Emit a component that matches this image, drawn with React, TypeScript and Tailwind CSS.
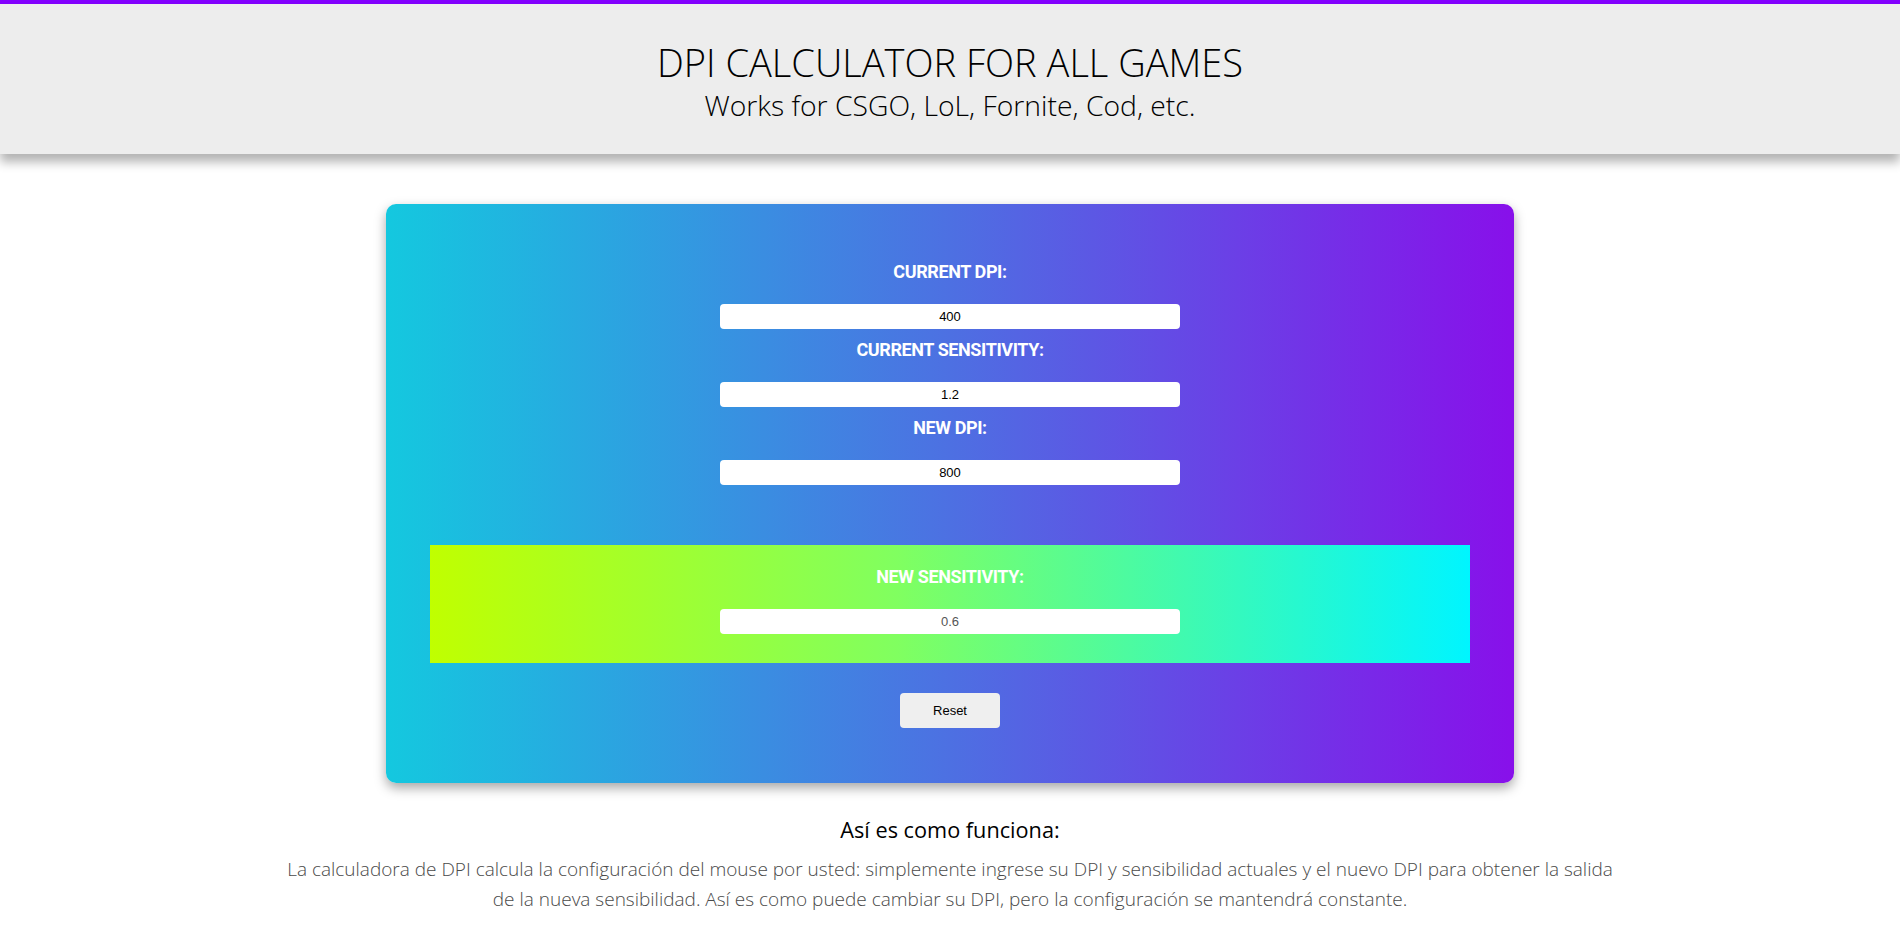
import React, { useState } from "react";

function Field({ label, value, gray, first }: { label: string; value: string; gray?: boolean; first?: boolean }) {
  return (
    <div className={`flex flex-col items-center ${first ? "" : "mt-[11px]"}`}>
      <div
        className="text-white font-bold text-[18px] leading-[20px] tracking-[-0.4px] mb-[22px]"
        style={{ fontFamily: "Roboto, 'Noto Sans', sans-serif" }}
      >
        {label}
      </div>
      <input
        readOnly
        value={value}
        className={`w-[460px] h-[25px] bg-white rounded-[4px] text-center text-[13px] outline-none border-0 ${gray ? "text-[#555]" : "text-black"}`}
        style={{ fontFamily: "'Liberation Sans', Arial, sans-serif" }}
      />
    </div>
  );
}

export default function App() {
  const [, setR] = useState(0);
  return (
    <div className="min-h-[938px] bg-white" style={{ fontFamily: "'Open Sans', sans-serif" }}>
      <div className="h-[4px] bg-[#8400ff]" />
      <header className="h-[150px] bg-[#ededed] flex flex-col items-center justify-center shadow-[0_8px_10px_rgba(0,0,0,0.3)] relative z-10">
        <h1 className="text-[38px] leading-[48px] font-light text-black mt-[3px]">DPI CALCULATOR FOR ALL GAMES</h1>
        <h2 className="text-[28.3px] leading-[36px] font-light text-black mt-[1px]">Works for CSGO, LoL, Fornite, Cod, etc.</h2>
      </header>

      <main className="flex flex-col items-center pt-[50px]">
        <div className="w-[1128px] rounded-[10px] bg-[linear-gradient(to_right,#14c8df,#4d70e2_50%,#8810ea)] shadow-[0_5px_12px_rgba(0,0,0,0.35)] pt-[58px] pb-[55px] px-[44px] flex flex-col items-center">
          <Field label="CURRENT DPI:" value="400" first />
          <Field label="CURRENT SENSITIVITY:" value="1.2" />
          <Field label="NEW DPI:" value="800" />
          <div className="mt-[60px] w-full h-[118px] bg-[linear-gradient(to_right,#c0ff00,#80ff60_45%,#00f5ff)] pt-[22px] flex flex-col items-center">
            <Field label="NEW SENSITIVITY:" value="0.6" gray first />
          </div>
          <button
            onClick={() => setR((x) => x + 1)}
            className="mt-[30px] w-[100px] h-[35px] bg-[#efefef] rounded-[4px] text-[13px] text-black"
            style={{ fontFamily: "'Liberation Sans', Arial, sans-serif" }}
          >
            Reset
          </button>
        </div>

        <h3 className="mt-[33px] text-[21.7px] leading-[28px] text-black">Así es como funciona:</h3>
        <p className="mt-[10px] w-[1338px] text-center text-[19px] leading-[30px] font-light text-[#4a4a4a]">
          La calculadora de DPI calcula la configuración del mouse por usted: simplemente ingrese su DPI y sensibilidad actuales y el nuevo DPI para obtener la salida de la nueva sensibilidad. Así es como puede cambiar su DPI, pero la configuración se mantendrá constante.
        </p>
      </main>
    </div>
  );
}
